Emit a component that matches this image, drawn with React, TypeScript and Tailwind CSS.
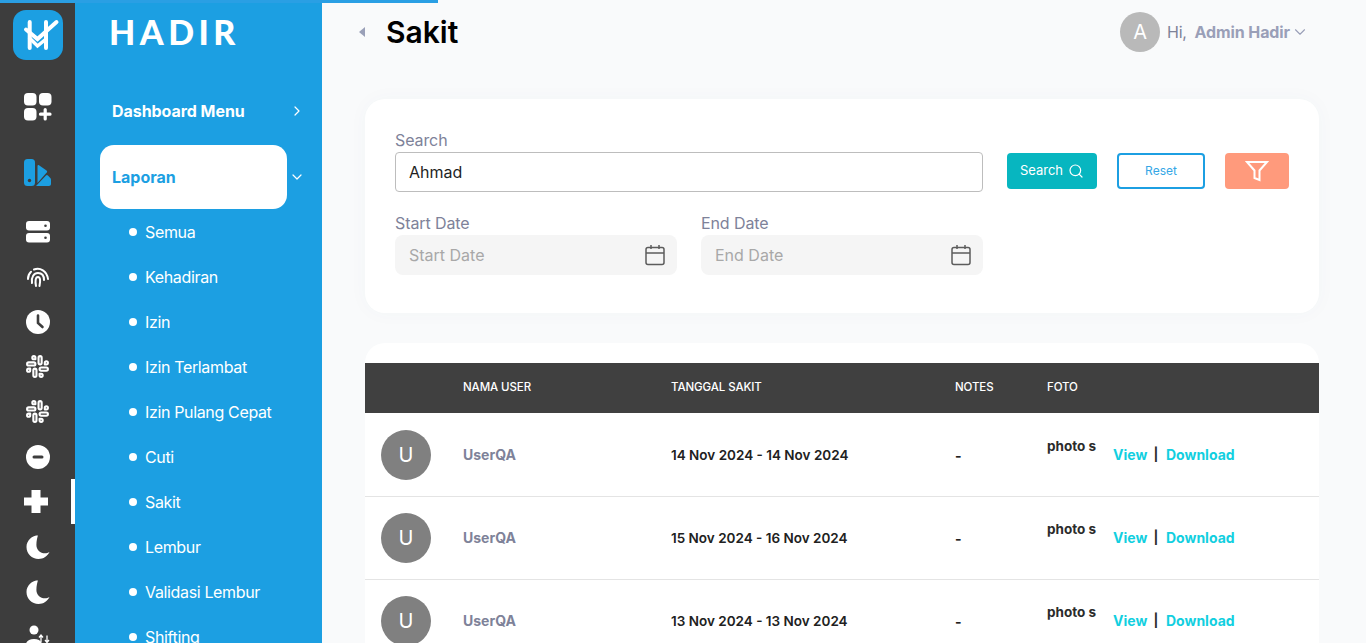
import React from "react";
import { ChevronRight, ChevronDown, Search, Slack } from "lucide-react";

const font = { fontFamily: "Inter, 'Noto Sans', sans-serif" };

function Logo() {
  return (
    <div className="w-[50px] h-[50px] rounded-[13px] bg-[#1c9fe2] mt-[10px] shrink-0">
      <svg width="50" height="50" viewBox="0 0 50 50" fill="none" stroke="#fff">
        <path d="M16.700 12V38M33 12V38" strokeWidth="4" strokeLinecap="round" />
        <path d="M16 27.500L24.500 36L33 29" strokeWidth="3.500" />
        <path d="M13 19.500L24.500 29L43.500 12" strokeWidth="4" strokeLinecap="round" />
      </svg>
    </div>
  );
}

const iconBox = "h-[45px] w-[75px] flex items-center justify-center shrink-0";

function Crescent() {
  return (
    <svg width="24" height="24" viewBox="0 0 24 24" fill="#fff">
      <path d="M12.500 0.300C6 .4 .5 5.500 .5 12c0 6.600 5.300 12 12 12 4.900 0 9-2.800 11-7-1.300 1-2.900 1.300-4.500 1.300-4.800 0-8.600-3.500-8.600-8.300 0-4.300 1-7.500 1.600-9.700z" />
    </svg>
  );
}

function IconRail() {
  return (
    <div className="w-[75px] h-full bg-[#3d3d3d] flex flex-col items-center shrink-0 overflow-hidden">
      <Logo />
      <div className="h-[28px] w-[28px] mt-[33px] shrink-0">
        <svg width="28" height="28" viewBox="0 0 28 28" fill="#fff">
          <rect x="0" y="0" width="12.500" height="12.500" rx="4" />
          <rect x="15" y="0" width="12.500" height="12.500" rx="4" />
          <rect x="0" y="15" width="12.500" height="12.500" rx="4" />
          <path d="M21.200 16.500v9.500M16.500 21.200h9.500" stroke="#fff" strokeWidth="3.200" strokeLinecap="round" />
        </svg>
      </div>
      <div className="h-[28px] w-[28px] mt-[38px] shrink-0">
        <svg width="28" height="28" viewBox="0 0 28 28" fill="#1c9fe2">
          <rect x="0" y="0" width="11" height="27" rx="3.500" />
          <path d="M13.500 7c0-1 .7-1.300 1.500-.8l7.500 5.300c.8.600.8 1.200.2 2L13.500 24z" />
          <path d="M12 27l10-10.500c.6-.7 1.300-.7 1.900 0l2.400 2.600c.5.500.7 1 .7 1.700V25c0 1.200-.9 2-2 2z" />
          <circle cx="5.500" cy="21.500" r="1.700" fill="#3d3d3d" />
        </svg>
      </div>
      <div className="mt-[22px] flex flex-col">
        <div className={iconBox}>
          <svg width="24" height="22" viewBox="0 0 24 22" fill="#fff">
            <rect x="0" y="0" width="24" height="9.500" rx="3" />
            <rect x="0" y="12" width="24" height="9.500" rx="3" />
            <circle cx="19.500" cy="4.700" r="1.300" fill="#3d3d3d" />
            <circle cx="19.500" cy="16.700" r="1.300" fill="#3d3d3d" />
          </svg>
        </div>
        <div className={iconBox}>
          <svg width="24" height="22" viewBox="0 0 24 22" fill="none" stroke="#fff" strokeWidth="2" strokeLinecap="round">
            <path d="M2 13C2 10 3 7.500 5 5.700" />
            <path d="M8 3.500C14 1 21 5 22 13" />
            <path d="M6 17C5 11 8 7 12 7C16 7 18 10 18 14" />
            <path d="M10 20C9 15 9.500 11 12 11C14.500 11 14.500 15 13.500 20" />
          </svg>
        </div>
        <div className={iconBox}>
          <svg width="24" height="24" viewBox="0 0 24 24">
            <circle cx="12" cy="12" r="12" fill="#fff" />
            <path d="M12 5.500V13l4.500 4" stroke="#3d3d3d" strokeWidth="2.600" fill="none" strokeLinecap="round" />
          </svg>
        </div>
        <div className={iconBox}>
          <Slack size={25} color="#fff" strokeWidth={2} />
        </div>
        <div className={iconBox}>
          <Slack size={25} color="#fff" strokeWidth={2} />
        </div>
        <div className={iconBox}>
          <svg width="24" height="24" viewBox="0 0 24 24">
            <circle cx="12" cy="12" r="12" fill="#fff" />
            <rect x="6.500" y="10.500" width="11" height="3" rx="1.500" fill="#3d3d3d" />
          </svg>
        </div>
        <div className={`${iconBox} relative`}>
          <svg width="24" height="23" viewBox="0 0 24 23" fill="#fff" className="mr-1">
            <path d="M7.500 0h9v7.500H24v8h-7.500V23h-9v-7.500H0v-8h7.500z" />
          </svg>
          <div className="absolute right-0 top-0 w-[4px] h-[45px] bg-white" />
        </div>
        <div className={iconBox}><Crescent /></div>
        <div className={iconBox}><Crescent /></div>
        <div className={iconBox}>
          <svg width="26" height="24" viewBox="0 0 26 24" fill="#fff">
            <circle cx="9" cy="5" r="4.500" />
            <path d="M0 24c0-7 3-10 9-10s9 3 9 10z" />
            <path d="M16 17v-6.500M14 12.500l2-2.500 2 2.500M22 10.500V17M20 15l2 2.500 2-2.500" stroke="#fff" strokeWidth="1.300" fill="none" />
          </svg>
        </div>
      </div>
    </div>
  );
}

const subs = ["Semua", "Kehadiran", "Izin", "Izin Terlambat", "Izin Pulang Cepat", "Cuti", "Sakit", "Lembur", "Validasi Lembur", "Shifting"];

function MenuPanel() {
  return (
    <div className="w-[247px] h-full bg-[#1c9fe2] text-white shrink-0 overflow-hidden">
      <div className="pl-[34px] pt-[10px] h-[87px] text-[34px] leading-[44px] font-black tracking-[4.500px]" style={{ fontFamily: "Lato, sans-serif" }}>HADIR</div>
      <div className="h-[48px] pl-[37px] pr-[17px] flex items-center justify-between">
        <span className="text-[16px] font-bold tracking-[-0.05px]">Dashboard Menu</span>
        <ChevronRight size={16} strokeWidth={1.8} />
      </div>
      <div className="mt-[10px] flex items-center pl-[25px] pr-[17px] justify-between">
        <div className="w-[187px] h-[64px] bg-white rounded-[14px] flex items-center pl-[12px] text-[#1c9fe2] text-[16px] font-bold">Laporan</div>
        <ChevronDown size={16} strokeWidth={1.8} />
      </div>
      <ul>
        {subs.map((s) => (
          <li key={s} className="h-[45px] flex items-center pl-[54px] text-[16px] tracking-[-0.35px] gap-[8px]">
            <span className="w-[8px] h-[8px] rounded-full bg-white" />
            <span>{s}</span>
          </li>
        ))}
      </ul>
    </div>
  );
}

function Field({ label, placeholder }: { label: string; placeholder: string }) {
  return (
    <div className="w-[282px] flex flex-col">
      <div className="text-[16px] leading-[24px] text-[#7e8299] tracking-[-0.1px]">{label}</div>
      <div className="h-[40px] rounded-[8px] bg-[#f5f5f5] flex items-center justify-between pl-[14px] pr-[11px]">
        <span className="text-[16px] text-[#a8a8a8]">{placeholder}</span>
        <svg width="22" height="22" viewBox="0 0 22 22" fill="none" stroke="#5c5c5c" strokeWidth="1.500">
          <rect x="2" y="3.500" width="18" height="17" rx="2" />
          <path d="M2 9h18M7 1v4M15 1v4" />
        </svg>
      </div>
    </div>
  );
}

function FilterCard() {
  return (
    <div className="bg-white rounded-[20px] h-[214px] px-[30px] pt-[29px] shadow-[0_0_20px_rgba(76,87,125,0.03)]">
      <div className="flex items-start">
        <div className="w-[588px] flex flex-col">
          <div className="text-[16px] leading-[24px] text-[#7e8299] tracking-[-0.1px]">Search</div>
          <div className="h-[40px] border border-[#bdbdbd] rounded-[4px] flex items-center pl-[13px] text-[16px] text-[#1f1f1f]">Ahmad</div>
        </div>
        <button className="mt-[25px] ml-[24px] w-[90px] h-[36px] rounded-[4px] bg-[#07b6c0] text-white text-[13px] flex items-center justify-center gap-[5px]">
          Search <Search size={16} strokeWidth={1.8} />
        </button>
        <button className="mt-[25px] ml-[20px] w-[88px] h-[36px] rounded-[4px] border-2 border-[#1c9fe2] text-[#35a7e6] text-[12px] flex items-center justify-center">
          Reset
        </button>
        <button className="mt-[25px] ml-[20px] w-[64px] h-[36px] rounded-[4px] bg-[#ff9a7c] flex items-center justify-center">
          <svg width="24" height="22" viewBox="0 0 24 22" fill="none" stroke="#fff" strokeWidth="2">
            <path d="M2 2h20l-7.500 8.500V20l-5-2v-7.500z" />
          </svg>
        </button>
      </div>
      <div className="flex gap-[24px] mt-[19px]">
        <Field label="Start Date" placeholder="Start Date" />
        <Field label="End Date" placeholder="End Date" />
      </div>
    </div>
  );
}

const rows = ["14 Nov 2024 - 14 Nov 2024", "15 Nov 2024 - 16 Nov 2024", "13 Nov 2024 - 13 Nov 2024"];
const cols = "grid grid-cols-[98px_208px_284px_92px_66px_1fr] items-center";

function TableCard() {
  return (
    <div className="mt-[30px] bg-white rounded-t-[20px] pt-[20px]">
      <div className={`${cols} h-[50px] bg-[#404040] text-white text-[11.500px] font-medium tracking-[-0.1px]`}>
        <div />
        <div>NAMA USER</div>
        <div>TANGGAL SAKIT</div>
        <div>NOTES</div>
        <div>FOTO</div>
        <div />
      </div>
      <div className="pt-px">
        {rows.map((d) => (
          <div key={d} className={`${cols} h-[83px] border-b border-[#e4e4e4] text-[14px]`}>
            <div className="pl-[16px]">
              <div className="w-[50px] h-[50px] rounded-full bg-[#808080] text-white text-[20px] flex items-center justify-center">U</div>
            </div>
            <div className="font-bold text-[#7e8299] -mt-px">UserQA</div>
            <div className="font-semibold text-[13.500px] text-[#212121]">{d}</div>
            <div className="font-bold text-[#212121]">-</div>
            <div className="font-bold text-[13.500px] text-[#2b2b2b] -mt-[18px]">photo s</div>
            <div className="font-bold flex items-center -mt-px">
              <span className="text-[#12cfe0] w-[33px]">View</span>
              <span className="text-[#2b2b2b] w-[20px] text-center text-[13px] font-bold mt-px">|</span>
              <span className="text-[#12cfe0]">Download</span>
            </div>
          </div>
        ))}
      </div>
    </div>
  );
}

export default function App() {
  return (
    <div className="relative h-[643px] w-[1366px] flex overflow-hidden bg-[#f9fafb]" style={font}>
      <div className="absolute top-0 left-0 h-[3px] w-[438px] bg-[#2a9fe4] z-10" />
      <IconRail />
      <MenuPanel />
      <main className="flex-1 min-w-0 pl-[43px] pr-[47px] overflow-hidden">
        <header className="h-[99px] flex items-start justify-between">
          <div className="flex items-center h-[64px] -ml-[6px]">
            <svg width="7" height="10" viewBox="0 0 7 10" fill="#9aa0b8"><path d="M6 0v10L0 5z" /></svg>
            <h1 className="ml-[20px] text-[30px] font-semibold text-black leading-none">Sakit</h1>
          </div>
          <div className="flex items-center h-[64px] mr-[10px]">
            <div className="w-[40px] h-[40px] rounded-full bg-[#b9b9b9] text-white text-[20px] flex items-center justify-center ml-[2px]">A</div>
            <span className="ml-[7px] text-[16px] text-[#7e8299] tracking-[-0.3px]">Hi,</span>
            <span className="ml-[8px] text-[16px] font-bold text-[#9a9fb8] tracking-[-0.1px]">Admin Hadir</span>
            <ChevronDown size={18} strokeWidth={1.5} className="text-[#9a9fb8] ml-[1px]" />
          </div>
        </header>
        <FilterCard />
        <TableCard />
      </main>
    </div>
  );
}
